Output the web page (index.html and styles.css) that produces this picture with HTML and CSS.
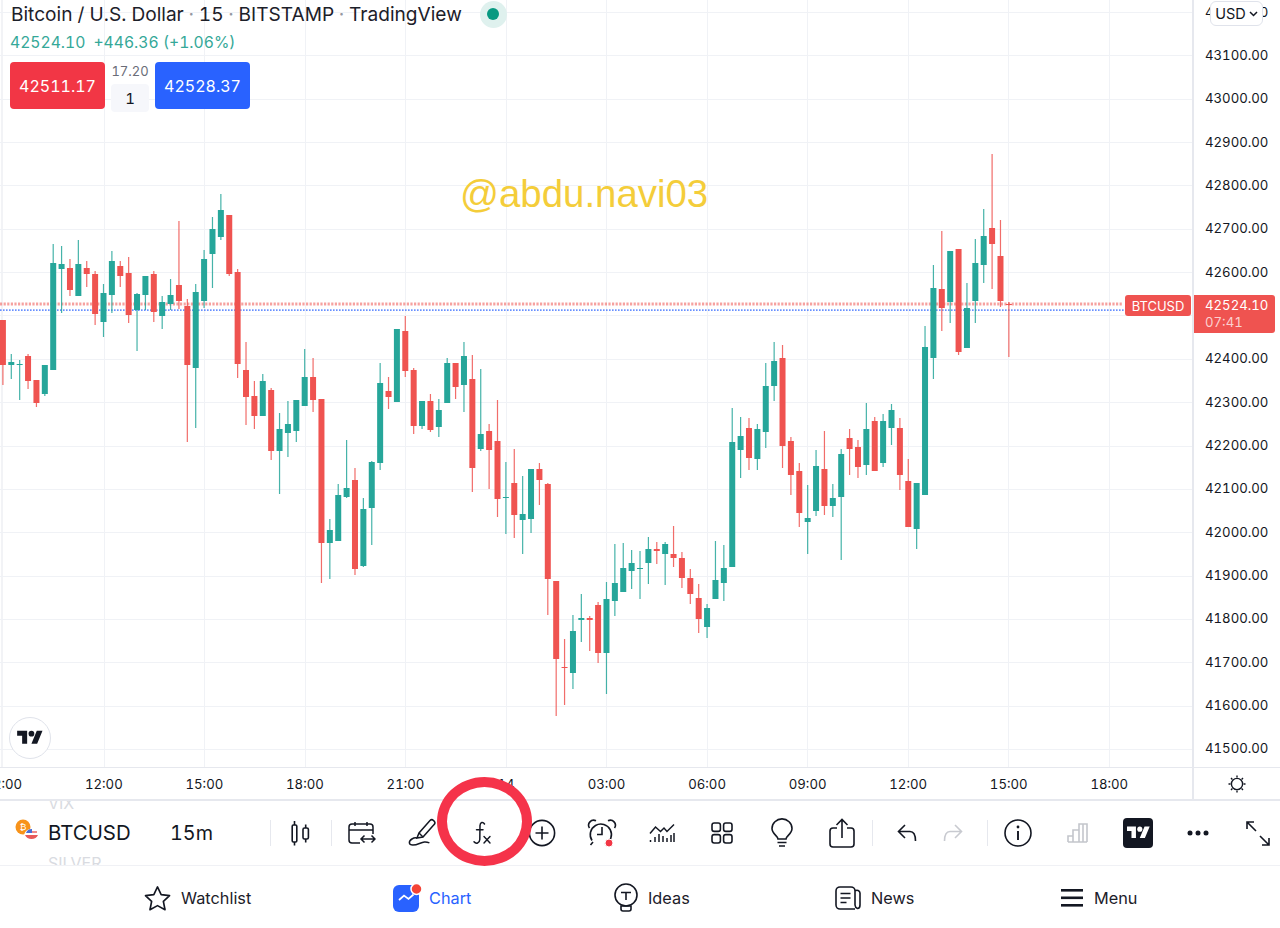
FILE: index.html
```html
<!DOCTYPE html>
<html lang="en">
<head>
<meta charset="utf-8">
<title>BTCUSD chart</title>
<link rel="stylesheet" href="styles.css">
</head>
<body>
<div class="app">
  <section class="chart">
    <div class="plot">
      <svg id="candles" class="candles" width="1192" height="767" viewBox="0 0 1192 767"></svg>
      <div class="legend">
        <div class="title">
          <span>Bitcoin / U.S. Dollar</span><i>·</i><span>15</span><i>·</i><span>BITSTAMP</span><i>·</i><span>TradingView</span>
          <b class="status"><b class="status-dot"></b></b>
        </div>
        <div class="quote"><span>42524.10</span><span>+446.36 (+1.06%)</span></div>
        <div class="trade">
          <div class="trade-btn sell">42511.17</div>
          <div class="spread"><span class="spread-val">17.20</span><span class="qty">1</span></div>
          <div class="trade-btn buy">42528.37</div>
        </div>
      </div>
      <div class="watermark">@abdu.navi03</div>
      <div class="sym-tag">BTCUSD</div>
      <div class="tv-badge">
        <svg width="26" height="20" viewBox="0 0 36 28"><path d="M14 22H7V11H0V4h14v18ZM28 22h-8l7.5-18h8L28 22Z" fill="#131722"/><circle cx="20" cy="8" r="4" fill="#131722"/></svg>
      </div>
    </div>
    <div class="price-axis">
      <div class="prices">
        <span>43200.00</span><span>43100.00</span><span>43000.00</span><span>42900.00</span><span>42800.00</span><span>42700.00</span><span>42600.00</span><span>42500.00</span><span>42400.00</span><span>42300.00</span><span>42200.00</span><span>42100.00</span><span>42000.00</span><span>41900.00</span><span>41800.00</span><span>41700.00</span><span>41600.00</span><span>41500.00</span>
      </div>
      <div class="currency">USD<svg width="9" height="6" viewBox="0 0 9 6"><path d="M1 1l3.5 3.5L8 1" fill="none" stroke="#131722" stroke-width="1.5"/></svg></div>
      <div class="price-tag"><span>42524.10</span><span class="countdown">07:41</span></div>
    </div>
  </section>

  <section class="time-row">
    <div class="times">
      <span>12:00</span><span>12:00</span><span>15:00</span><span>18:00</span><span>21:00</span><span>14</span><span>03:00</span><span>06:00</span><span>09:00</span><span>12:00</span><span>15:00</span><span>18:00</span>
    </div>
    <div class="axis-settings">
      <svg width="20" height="20" viewBox="0 0 20 20" fill="none" stroke="#131722" stroke-width="1.4"><circle cx="10" cy="10" r="5.6"/><path d="M10 1.5v2M10 16.5v2M1.5 10h2M16.5 10h2M4 4l1.4 1.4M14.6 14.6L16 16M4 16l1.4-1.4M14.6 5.4L16 4"/></svg>
    </div>
  </section>

  <section class="toolbar">
    <div class="symbol-icon">
      <svg width="24" height="24" viewBox="0 0 24 24">
        <circle cx="8" cy="8" r="7.5" fill="#f7931a"/>
        <text x="8" y="11" class="btc-glyph">₿</text>
        <circle cx="16" cy="17" r="7" fill="#fff"/>
        <path d="M10 16h13a7 6.5 0 0 1-13 0Z" fill="#e85a5a"/>
        <path d="M11 14a6 6 0 0 1 6-4v4Z" fill="#4a6fd8"/>
        <path d="M17 12h5v2h-5Z" fill="#e85a5a" opacity=".7"/>
      </svg>
    </div>
    <div class="symbols"><span class="ghost">VIX</span><span class="current">BTCUSD</span><span class="ghost">SILVER</span></div>
    <div class="interval">15m</div>
    <div class="sep"></div>
    <div class="tool">
      <svg width="20" height="26" viewBox="0 0 20 26" fill="none" stroke="#131722" stroke-width="1.6"><rect x="1.2" y="5" width="4.6" height="17" rx="1.2"/><path d="M3.5 1v4M3.5 22v3.5"/><rect x="12" y="8" width="5.4" height="11" rx="1.6"/><path d="M14.7 4.5V8M14.7 19v3.5"/></svg>
    </div>
    <div class="sep"></div>
    <div class="tool">
      <svg width="28" height="24" viewBox="0 0 28 24" fill="none" stroke="#131722" stroke-width="1.5"><path d="M12 22H4a3 3 0 0 1-3-3V6a3 3 0 0 1 3-3h18a3 3 0 0 1 3 3v7M1 9h24M7 1v4M19 1v4"/><path d="M13 18h14M16.5 14.5L13 18l3.5 3.5M23.5 14.5L27 18l-3.5 3.5"/></svg>
    </div>
    <div class="tool">
      <svg width="28" height="30" viewBox="0 0 28 30" fill="none" stroke="#131722" stroke-width="1.5"><path d="M9 20l2-5L22 2.5a2.5 2.5 0 0 1 3.5 0l.6.6a2.5 2.5 0 0 1 0 3.5L15 19l-6 1Z"/><path d="M11 15l4 4"/><path d="M9 20c-3-1-8 2-7.6 5 .4 3 5.6 2.4 10 .5 4-1.6 6-2.4 10-.6"/></svg>
    </div>
    <div class="tool">
      <svg width="20" height="24" viewBox="0 0 20 24" fill="none" stroke="#131722" stroke-width="1.5" stroke-linecap="round"><path d="M12.500 3C11 .6 8.200 1 8 4.500L7.800 18.500C7.600 22.400 4 23.200 2 20.800"/><path d="M4.500 8.800h6.500"/><path d="M12 15.500l6 6.500M18 15.500l-6 6.500" stroke-width="1.4"/></svg>
    </div>
    <div class="tool">
      <svg width="28" height="28" viewBox="0 0 28 28" fill="none" stroke="#131722" stroke-width="1.6"><circle cx="14" cy="14" r="12.6"/><path d="M14 7.5v13M7.5 14h13"/></svg>
    </div>
    <div class="tool">
      <svg width="30" height="30" viewBox="0 0 30 30" fill="none" stroke="#131722" stroke-width="1.6"><path d="M5 22.500A10.600 10.600 0 1 1 18 26.400"/><path d="M15 9v7.500H10M2.500 10A5 5 0 0 1 9 2.800M27.500 10A5 5 0 0 0 21 2.800M6 24l-2.500 3"/><circle cx="22" cy="25" r="4" fill="#f23645" stroke="#fff" stroke-width="1"/></svg>
    </div>
    <div class="tool">
      <svg width="26" height="20" viewBox="0 0 26 20" fill="none" stroke="#131722" stroke-width="1.5"><path d="M1 10.5L6.5 4l5 4.5 3.5-3.5 3 3.5L25 1.5"/><path d="M1.5 19v-2M6 19v-5M10 19v-8M14 19v-6M18 19v-4M22 19v-7M25 19v-9"/></svg>
    </div>
    <div class="tool">
      <svg width="22" height="22" viewBox="0 0 22 22" fill="none" stroke="#131722" stroke-width="1.6"><rect x="1" y="1" width="8.4" height="8.4" rx="2.2"/><rect x="12.6" y="1" width="8.4" height="8.4" rx="2.2"/><rect x="1" y="12.6" width="8.4" height="8.4" rx="2.2"/><rect x="12.6" y="12.6" width="8.4" height="8.4" rx="2.2"/></svg>
    </div>
    <div class="tool">
      <svg width="22" height="30" viewBox="0 0 22 30" fill="none" stroke="#131722" stroke-width="1.6"><path d="M7 21c0-3-6-5-6-10.5a10 9.6 0 0 1 20 0C21 16 15 18 15 21Z"/><path d="M6.5 24.5h9M8 28h6"/></svg>
    </div>
    <div class="tool">
      <svg width="26" height="30" viewBox="0 0 26 30" fill="none" stroke="#131722" stroke-width="1.6"><path d="M8 10H4a3 3 0 0 0-3 3v13a3 3 0 0 0 3 3h18a3 3 0 0 0 3-3V13a3 3 0 0 0-3-3h-4"/><path d="M13 20V2M7.5 7L13 1.5 18.5 7"/></svg>
    </div>
    <div class="sep"></div>
    <div class="spacer-a"></div>
    <div class="tool-sm">
      <svg width="20" height="18" viewBox="0 0 20 18" fill="none" stroke="#131722" stroke-width="1.6"><path d="M8 1L1.5 7.5 8 14M1.5 7.5H13c3.5 0 5.5 3 5.5 9.5"/></svg>
    </div>
    <div class="tool-sm">
      <svg width="20" height="18" viewBox="0 0 20 18" fill="none" stroke="#c8cad0" stroke-width="1.6"><path d="M12 1l6.5 6.5L12 14M18.5 7.5H7C3.5 7.5 1.5 10.500 1.500 17"/></svg>
    </div>
    <div class="spacer-b"></div>
    <div class="sep"></div>
    <div class="tool">
      <svg width="28" height="28" viewBox="0 0 28 28" fill="none" stroke="#131722" stroke-width="1.6"><circle cx="14" cy="14" r="13"/><path d="M14 12v9" stroke-width="1.9"/><circle cx="14" cy="8" r="1.4" fill="#131722" stroke="none"/></svg>
    </div>
    <div class="tool">
      <svg width="22" height="20" viewBox="0 0 22 20" fill="none" stroke="#c4c6cc" stroke-width="1.6"><path d="M1 19v-6h5v6M6 19V7h6v12M12 19V1h8v18M1 19h19"/><path d="M16 1v18"/></svg>
    </div>
    <div class="tool">
      <span class="tv-square"><svg width="23" height="18" viewBox="0 0 36 28"><path d="M14 22H7V11H0V4h14v18ZM28 22h-8l7.500-18h8L28 22Z" fill="#fff"/><circle cx="20" cy="8" r="4" fill="#fff"/></svg></span>
    </div>
    <div class="tool">
      <svg width="22" height="6" viewBox="0 0 22 6" fill="#131722"><circle cx="3" cy="3" r="2.500"/><circle cx="11" cy="3" r="2.500"/><circle cx="19" cy="3" r="2.500"/></svg>
    </div>
    <div class="tool">
      <svg width="24" height="25" viewBox="0 0 24 25" fill="none" stroke="#131722" stroke-width="1.6"><path d="M1 8V1h7M1 1l9 9M23 17v7h-7M23 24l-9-9"/></svg>
    </div>
  </section>

  <nav class="tabs">
    <a class="tab">
      <svg width="27" height="26" viewBox="0 0 28 26" fill="none" stroke="#131722" stroke-width="1.7" stroke-linejoin="round"><path d="M14 1.500l3.800 8 8.700 1.100-6.400 6 1.700 8.600-7.800-4.300-7.800 4.300 1.700-8.600-6.400-6 8.700-1.100Z"/></svg>
      <span>Watchlist</span>
    </a>
    <a class="tab active">
      <svg class="badge-icon" width="26" height="28" viewBox="0 0 26 28"><rect y="1" width="26" height="27" rx="6" fill="#2962ff"/><path d="M6 16l5-4.500 4.500 3.500 5-4.500" fill="none" stroke="#fff" stroke-width="1.700"/><circle cx="23.500" cy="5" r="5.500" fill="#f44336" stroke="#fff" stroke-width="1.500"/></svg>
      <span>Chart</span>
    </a>
    <a class="tab">
      <svg width="24" height="30" viewBox="0 0 24 30" fill="none" stroke="#131722" stroke-width="1.600"><circle cx="12" cy="12" r="11"/><path d="M7 9.500h10M12 9.500V17M7 23h10v3a2 2 0 0 1-2 2H9a2 2 0 0 1-2-2Z"/></svg>
      <span>Ideas</span>
    </a>
    <a class="tab">
      <svg width="26" height="24" viewBox="0 0 26 24" fill="none" stroke="#131722" stroke-width="1.600"><path d="M20 23H5a4 4 0 0 1-4-4V5a4 4 0 0 1 4-4h11a4 4 0 0 1 4 4v14a4 4 0 0 0 2.500 3.500c1.500 0 2.500-1.500 2.500-3.500V7a3 3 0 0 0-5-2"/><path d="M5.500 7.500h10M5.500 12h10M5.500 16.500h6"/></svg>
      <span>News</span>
    </a>
    <a class="tab">
      <svg width="24" height="18" viewBox="0 0 24 18" fill="#131722"><rect x="1" width="22" height="2.600"/><rect x="1" y="7.500" width="22" height="2.600"/><rect x="1" y="15" width="22" height="2.600"/></svg>
      <span>Menu</span>
    </a>
  </nav>

  <div class="ring"></div>
</div>
<script src="chart.js"></script>
</body>
</html>
```
FILE: styles.css
```css
* { box-sizing: border-box; }
html, body { margin: 0; padding: 0; background: #fff; }
body {
  font-family: Inter, "Liberation Sans", sans-serif;
  font-variant-numeric: tabular-nums;
  color: #131722;
}

.app {
  position: relative;
  width: 1280px;
  height: 928px;
  display: flex;
  flex-direction: column;
  overflow: hidden;
}

/* chart */
.chart { display: flex; height: 767px; flex: none; }
.plot { position: relative; width: 1192px; flex: none; overflow: hidden; }
.candles { display: block; }

.legend {
  position: absolute;
  left: 10px;
  top: 0;
  display: flex;
  flex-direction: column;
}
.title {
  display: flex;
  align-items: center;
  height: 28px;
  font-size: 19.100px;
  color: #1c2029;
  white-space: nowrap;
  margin-left: 1px;
}
.title i { font-style: normal; color: #9598a1; width: 15px; text-align: center; }
.status {
  display: flex;
  align-items: center;
  justify-content: center;
  width: 27px;
  height: 27px;
  border-radius: 50%;
  background: #dff1ee;
  margin-left: 18px;
}
.status-dot { width: 12px; height: 12px; border-radius: 50%; background: #089981; }
.quote {
  display: flex;
  gap: 8px;
  height: 28px;
  align-items: center;
  font-size: 15.700px;
  color: #35a898;
  white-space: nowrap;
}
.trade { display: flex; margin-top: 6px; align-items: flex-start; }
.trade-btn {
  width: 95px;
  height: 47px;
  border-radius: 4px;
  color: #fff;
  font-size: 16px;
  display: flex;
  align-items: center;
  justify-content: center;
}
.sell { background: #f23645; }
.buy { background: #2962ff; }
.spread { width: 50px; display: flex; flex-direction: column; align-items: center; }
.spread-val { font-size: 13px; color: #6a6d78; height: 22px; line-height: 18px; }
.qty {
  width: 38px;
  height: 28px;
  background: #f6f7fb;
  border-radius: 4px;
  font-size: 15px;
  display: flex;
  align-items: center;
  justify-content: center;
}

.watermark {
  position: absolute;
  left: 460px;
  top: 173px;
  font-family: "Liberation Sans", sans-serif;
  font-size: 38.400px;
  line-height: 42px;
  color: #f4cd3a;
  white-space: nowrap;
}
.sym-tag {
  position: absolute;
  left: 1125px;
  top: 295px;
  width: 66px;
  height: 21px;
  background: #ef5350;
  color: #fff;
  border-radius: 3px;
  font-size: 13px;
  display: flex;
  align-items: center;
  justify-content: center;
}
.tv-badge {
  position: absolute;
  left: 9px;
  top: 717px;
  width: 42px;
  height: 42px;
  border-radius: 50%;
  background: #fff;
  border: 1px solid #e0e3eb;
  display: flex;
  align-items: center;
  justify-content: center;
}

/* price axis */
.price-axis {
  position: relative;
  width: 88px;
  flex: none;
  border-left: 2px solid #e6e8ee;
  overflow: hidden;
}
.prices {
  display: flex;
  flex-direction: column;
  margin-top: -9.500px;
  padding-left: 11px;
}
.prices span { height: 43.350px; line-height: 43.350px; font-size: 13.200px; white-space: nowrap; }
.currency {
  position: absolute;
  left: 16px;
  top: 1px;
  width: 53px;
  height: 25px;
  background: #fff;
  border: 1px solid #e0e3eb;
  border-radius: 6px;
  font-size: 14.500px;
  display: flex;
  align-items: center;
  justify-content: center;
  gap: 3px;
}
.price-tag {
  position: absolute;
  left: 0;
  top: 295px;
  width: 81px;
  height: 38px;
  background: #ef5350;
  color: #fff;
  border-radius: 0 3px 3px 0;
  font-size: 13.200px;
  padding-left: 11px;
  display: flex;
  flex-direction: column;
  justify-content: center;
  line-height: 17.500px;
}
.countdown { color: #fbd0cf; }

/* time axis */
.time-row {
  display: flex;
  height: 34px;
  flex: none;
  border-top: 1px solid #e6e8ee;
  border-bottom: 2px solid #e6e8ee;
}
.times { width: 1192px; flex: none; display: flex; overflow: hidden; }
.times span {
  width: 100.550px;
  flex: none;
  text-align: center;
  font-size: 13.200px;
  line-height: 33px;
}
.times span:first-child { margin-left: -47px; }
.axis-settings {
  flex: 1;
  border-left: 2px solid #e6e8ee;
  display: flex;
  align-items: center;
  justify-content: center;
}

/* toolbar */
.toolbar {
  display: flex;
  align-items: center;
  height: 65px;
  flex: none;
  overflow: hidden;
  border-bottom: 1px solid #f0f1f5;
}
.symbol-icon { width: 48px; flex: none; padding-left: 15px; display: flex; margin-top: -4px; }
.symbols { width: 122px; flex: none; display: flex; flex-direction: column; align-self: center; }
.symbols span { height: 30px; line-height: 30px; white-space: nowrap; }
.current { font-size: 20.400px; }
.ghost { font-size: 16px; color: #d9dbe1; }
.btc-glyph { font-family: "DejaVu Sans", sans-serif; font-size: 9px; fill: #fff; text-anchor: middle; }
.interval { width: 100px; flex: none; font-size: 19.800px; }
.sep { width: 1px; height: 26px; background: #e6e8ee; flex: none; }
.tool { width: 60px; height: 40px; flex: none; display: flex; align-items: center; justify-content: center; }
.tool-sm { width: 46px; height: 40px; flex: none; display: flex; align-items: center; justify-content: center; }
.spacer-a { width: 11px; flex: none; }
.spacer-b { width: 11px; flex: none; }
.tv-square {
  width: 30px;
  height: 30px;
  border-radius: 4px;
  background: #131722;
  display: flex;
  align-items: center;
  justify-content: center;
}

/* tabs */
.tabs {
  display: grid;
  grid-template-columns: 249px 221px 221px 225px auto;
  padding: 1px 0 0 144px;
  height: 62px;
  flex: none;
  align-items: center;
}
.tab { display: flex; align-items: center; gap: 10px; font-size: 16.300px; color: #1c2029; }
.tab.active { color: #2962ff; }
.badge-icon { overflow: visible; }

.ring {
  position: absolute;
  left: 437px;
  top: 777px;
  width: 95px;
  height: 89px;
  border: 10px solid #f5334a;
  border-radius: 50%;
}
```
FILE: chart.js
```js
// [wickTop, bodyTop, bodyBottom, wickBottom, direction] in chart pixels
var D = [
[320,320,365,385,0],[354,362,365,379,1],[360,364,365,400,1],[354,356,381,389,0],[380,380,403,407,0],[365,365,394,396,1],
[244,263,370,370,1],[246,264,269,313,1],[259,268,290,296,0],[240,264,296,296,1],[261,268,274,287,0],[271,274,314,325,0],
[284,293,322,337,1],[251,261,295,313,1],[261,266,276,287,0],[257,273,315,323,0],[293,294,310,351,1],[276,276,295,310,1],
[271,274,312,322,0],[296,302,316,329,1],[279,295,304,310,1],[221,285,301,309,0],[299,306,365,442,0],[284,292,368,428,1],
[250,259,301,308,1],[217,229,254,288,1],[194,210,237,240,1],[215,215,274,276,0],[269,272,364,378,0],[342,370,397,425,0],
[381,396,416,429,0],[374,381,416,416,1],[388,390,451,460,0],[413,429,451,494,1],[401,424,433,457,1],[400,400,431,442,1],
[349,377,406,406,1],[358,377,400,412,0],[399,399,543,583,0],[519,530,543,579,1],[484,495,541,541,1],[440,488,497,498,1],
[468,480,569,575,0],[498,509,566,567,1],[461,462,508,545,1],[363,383,463,470,1],[377,391,397,409,0],[329,329,402,402,1],
[316,331,371,377,0],[368,370,426,434,0],[401,401,426,429,1],[394,401,430,432,0],[399,410,427,437,1],[358,363,403,403,1],
[363,363,387,399,0],[342,356,385,412,1],[355,379,468,492,0],[369,434,449,451,1],[424,431,450,489,0],[400,441,499,517,0],
[462,497,498,534,1],[449,483,515,538,0],[476,514,520,554,1],[469,469,519,533,1],[463,469,480,505,0],[483,484,579,615,0],
[581,581,659,716,0],[639,667,668,705,0],[615,631,673,689,1],[594,618,620,642,1],[616,618,620,651,0],[602,605,653,663,0],
[582,599,653,694,1],[544,583,601,616,1],[543,568,592,592,1],[550,563,571,589,1],[551,568,569,599,1],[537,549,563,584,1],
[542,549,551,564,0],[542,544,554,585,1],[526,554,558,567,0],[552,558,578,588,0],[569,578,594,604,0],[584,598,619,633,0],
[604,608,627,638,1],[541,580,599,599,1],[545,568,583,601,1],[408,442,567,567,1],[417,436,450,478,1],[418,428,458,470,0],
[424,429,459,470,1],[363,386,432,448,1],[342,361,386,401,1],[345,358,446,468,0],[437,441,475,495,0],[463,471,513,527,0],
[485,518,522,554,1],[450,466,511,516,1],[431,469,506,515,0],[484,498,506,517,1],[449,454,497,560,1],[429,438,449,475,0],
[440,447,467,478,0],[403,429,465,475,1],[417,421,471,471,0],[414,421,463,467,1],[404,410,428,445,1],[418,428,475,490,0],
[459,481,527,527,0],[483,483,529,549,1],[326,347,495,495,1],[265,288,358,379,1],[231,289,308,331,0],[251,251,302,323,1],
[249,249,352,355,0],[283,308,348,348,1],[239,263,301,323,1],[209,236,265,283,1],[154,228,244,289,0],[220,256,301,307,0],
[302,304,305,357,0]
];
var NS = 'http://www.w3.org/2000/svg';
var svg = document.getElementById('candles');
var PALETTE = ['#ef5350', '#26a69a'];

function rect(x, y, w, h, fill, opacity) {
  var r = document.createElementNS(NS, 'rect');
  r.setAttribute('x', x);
  r.setAttribute('y', y);
  r.setAttribute('width', w);
  r.setAttribute('height', h);
  r.setAttribute('fill', fill);
  if (opacity) r.setAttribute('opacity', opacity);
  svg.appendChild(r);
}

// grid
rect(1.5, 0, 1, 767, '#e6e8ee');
for (var gx = 0; gx < 11; gx++) rect(Math.round(103.5 + gx * 100.55), 0, 1, 767, '#f0f2f6');
for (var gy = 0; gy < 18; gy++) rect(0, Math.round(12 + gy * 43.35), 1192, 1, '#f0f2f6');

// price lines
for (var px = 0; px < 1123; px += 3.6) rect(px, 302.5, 2.2, 3, '#ef5350', 0.55);
for (var bx = 0; bx < 1123; bx += 3) rect(bx, 309.5, 1.6, 1.2, '#2962ff');

// candles
D.forEach(function (c, i) {
  var x = 103.5 + (i - 12) * 8.383;
  var col = PALETTE[c[4]];
  rect(x - 0.6, c[0], 1.2, c[3] - c[0], col, 0.85);
  rect(x - 3, c[1], 6, Math.max(c[2] - c[1], 1), col);
});
```
